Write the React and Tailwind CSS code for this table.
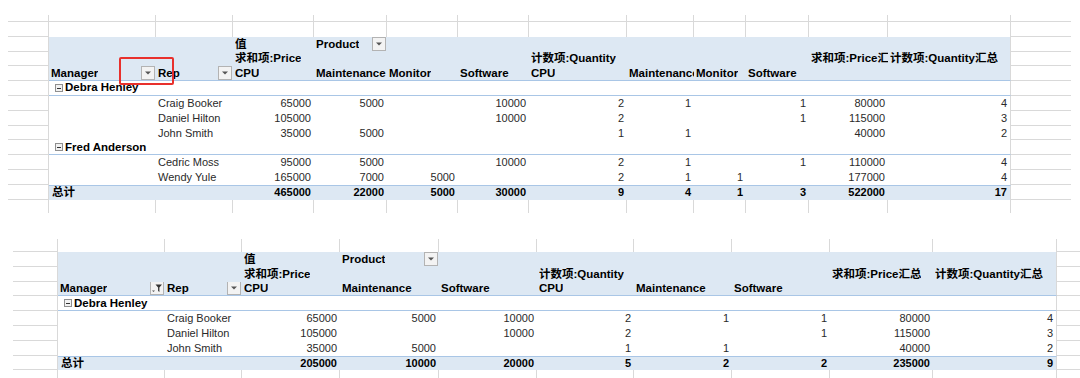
import React from "react";

const TOP = "grid grid-cols-[41px_107px_77px_81px_73px_71px_71px_98px_67px_52px_63px_79px_123px_60px]";
const BOT = "grid grid-cols-[45px_107px_77px_98px_99px_98px_97px_98px_98px_103px_124px_1fr]";

const MARGIN_L = {
  stubAll: "border-r border-b border-[#d9d9d9]",
  stubMargin: "border-r border-b border-[#d9d9d9]",
  tail: "border-r border-[#d9d9d9]",
  table: "border-r border-b border-[#d9d9d9]",
};
const MARGIN_R = {
  stubAll: "border-b border-[#d9d9d9]",
  stubMargin: "border-b border-[#d9d9d9]",
  tail: "",
  table: "border-b border-[#d9d9d9]",
};
const STUB_CELL = {
  stubAll: "border-r border-b border-[#d9d9d9]",
  stubMargin: "border-r border-[#d9d9d9]",
  tail: "border-r border-[#d9d9d9]",
};
const TABLE_CELL = {
  header: "bg-[#dde8f3]",
  headerLast: "bg-[#dde8f3] border-b border-b-[#a9c6e6]",
  group: "border-b border-b-[#a9c6e6]",
  data: "",
  total: "bg-[#dde8f3] border-t border-t-[#a9c6e6]",
};

function ArrowButton() {
  return (
    <span className="w-[14px] h-[14px] mr-[1px] shrink-0 border border-[#b3b3b3] bg-[#f3f3f3] flex items-center justify-center">
      <svg width="6" height="4" viewBox="0 0 6 4">
        <path d="M0 0.5H6L3 3.5Z" fill="#555" />
      </svg>
    </span>
  );
}

function FilterButton() {
  return (
    <span className="w-[14px] h-[14px] mr-[1px] shrink-0 border border-[#b3b3b3] bg-[#f3f3f3] flex items-center justify-center">
      <svg width="12" height="12" viewBox="0 0 12 12">
        <path d="M1 8.5H4L2.5 10Z" fill="#555" />
        <path d="M4.5 2.5H11L8.4 5.6V10L7.1 9V5.6Z" fill="#333" />
      </svg>
    </span>
  );
}

function MinusBox() {
  return (
    <span className="w-[8px] h-[8px] mr-[2px] shrink-0 border border-[#8f8f8f] bg-[#f2f2f2] flex items-center justify-center">
      <span className="w-[4px] h-[1px] bg-[#333]" />
    </span>
  );
}

function Cell({ kind, cell, idx, last }) {
  const border = last ? "border-r border-r-[#d9d9d9]" : "";
  const base = `${TABLE_CELL[kind]} ${border} overflow-hidden`;
  if (cell === null || cell === undefined || cell === "") {
    return <div className={base} />;
  }
  if (kind === "header" || kind === "headerLast") {
    const c = typeof cell === "string" ? { t: cell } : cell;
    return (
      <div className={`${base} flex items-center justify-between pl-[2px] font-bold text-[11.5px] text-black`}>
        <div className="overflow-hidden whitespace-nowrap min-w-0">{c.t}</div>
        {c.dd === "arrow" && <ArrowButton />}
        {c.dd === "filter" && <FilterButton />}
      </div>
    );
  }
  if (kind === "group") {
    return (
      <div className={`${base} flex items-center pl-[6px] font-bold text-[11.5px] text-black whitespace-nowrap`}>
        <MinusBox />
        <span>{cell}</span>
      </div>
    );
  }
  if (kind === "total") {
    if (idx === 0) {
      return (
        <div className={`${base} flex items-center pl-[3px] font-bold text-[11.5px] text-black whitespace-nowrap`}>
          {cell}
        </div>
      );
    }
    return (
      <div className={`${base} flex items-center justify-end pr-[3px] font-bold text-[11px] text-black whitespace-nowrap`}>
        {cell}
      </div>
    );
  }
  if (idx === 1) {
    return (
      <div className={`${base} flex items-center pl-[2px] text-[11px] text-[#2a2a2a] whitespace-nowrap`}>
        {cell}
      </div>
    );
  }
  return (
    <div className={`${base} flex items-center justify-end pr-[3px] text-[11px] text-[#2a2a2a] whitespace-nowrap`}>
      {cell}
    </div>
  );
}

function Row({ tpl, n, kind, h, cells }) {
  const isStub = kind === "stubAll" || kind === "stubMargin" || kind === "tail";
  const mk = isStub ? kind : "table";
  return (
    <div className={`${tpl} ${h}`}>
      <div className={MARGIN_L[mk]} />
      {Array.from({ length: n }).map((_, i) =>
        isStub ? (
          <div key={i} className={STUB_CELL[kind]} />
        ) : (
          <Cell key={i} kind={kind} cell={cells ? cells[i] : null} idx={i} last={i === n - 1} />
        )
      )}
      <div className={MARGIN_R[mk]} />
    </div>
  );
}

const R = "h-[14.8px]";

const topRows = [
  { kind: "stubAll", h: "h-[7px]" },
  { kind: "stubMargin", h: R },
  { kind: "header", h: R, cells: [null, null, "值", { t: "Product", dd: "arrow" }, null, null, null, null, null, null, null, null] },
  { kind: "header", h: R, cells: [null, null, "求和项:Price", null, null, null, "计数项:Quantity", null, null, null, "求和项:Price汇总", "计数项:Quantity汇总"] },
  { kind: "headerLast", h: R, cells: [{ t: "Manager", dd: "arrow" }, { t: "Rep", dd: "arrow" }, "CPU", "Maintenance", "Monitor", "Software", "CPU", "Maintenance", "Monitor", "Software", null, null] },
  { kind: "group", h: R, cells: ["Debra Henley"] },
  { kind: "data", h: R, cells: ["", "Craig Booker", "65000", "5000", "", "10000", "2", "1", "", "1", "80000", "4"] },
  { kind: "data", h: R, cells: ["", "Daniel Hilton", "105000", "", "", "10000", "2", "", "", "1", "115000", "3"] },
  { kind: "data", h: R, cells: ["", "John Smith", "35000", "5000", "", "", "1", "1", "", "", "40000", "2"] },
  { kind: "group", h: R, cells: ["Fred Anderson"] },
  { kind: "data", h: R, cells: ["", "Cedric Moss", "95000", "5000", "", "10000", "2", "1", "", "1", "110000", "4"] },
  { kind: "data", h: R, cells: ["", "Wendy Yule", "165000", "7000", "5000", "", "2", "1", "1", "", "177000", "4"] },
  { kind: "total", h: R, cells: ["总计", "", "465000", "22000", "5000", "30000", "9", "4", "1", "3", "522000", "17"] },
  { kind: "tail", h: "h-[13.4px]" },
];

const botRows = [
  { kind: "stubMargin", h: "h-[13px]" },
  { kind: "header", h: R, cells: [null, null, "值", { t: "Product", dd: "arrow" }, null, null, null, null, null, null] },
  { kind: "header", h: R, cells: [null, null, "求和项:Price", null, null, "计数项:Quantity", null, null, "求和项:Price汇总", "计数项:Quantity汇总"] },
  { kind: "headerLast", h: R, cells: [{ t: "Manager", dd: "filter" }, { t: "Rep", dd: "arrow" }, "CPU", "Maintenance", "Software", "CPU", "Maintenance", "Software", null, null] },
  { kind: "group", h: R, cells: ["Debra Henley"] },
  { kind: "data", h: R, cells: ["", "Craig Booker", "65000", "5000", "10000", "2", "1", "1", "80000", "4"] },
  { kind: "data", h: R, cells: ["", "Daniel Hilton", "105000", "", "10000", "2", "", "1", "115000", "3"] },
  { kind: "data", h: R, cells: ["", "John Smith", "35000", "5000", "", "1", "1", "", "40000", "2"] },
  { kind: "total", h: R, cells: ["总计", "", "205000", "10000", "20000", "5", "2", "2", "235000", "9"] },
  { kind: "tail", h: "h-[10px]" },
];

export default function App() {
  return (
    <div className="relative w-[1080px] h-[378px] bg-white overflow-hidden font-['Liberation_Sans','Noto_Sans_CJK_SC',sans-serif] text-[11px]">
      <div className="pt-[15px] pl-[8px]">
        <div className="w-[1063px] flex flex-col">
          {topRows.map((r, i) => (
            <Row key={i} tpl={TOP} n={12} kind={r.kind} h={r.h} cells={r.cells} />
          ))}
        </div>
      </div>
      <div className="mt-[26px] pl-[13px]">
        <div className="w-[1067px] flex flex-col">
          {botRows.map((r, i) => (
            <Row key={i} tpl={BOT} n={10} kind={r.kind} h={r.h} cells={r.cells} />
          ))}
        </div>
      </div>
      <div className="absolute left-[119px] top-[57px] w-[55px] h-[28px] border-[2.5px] border-[#e8302c] rounded-[2px]" />
    </div>
  );
}
